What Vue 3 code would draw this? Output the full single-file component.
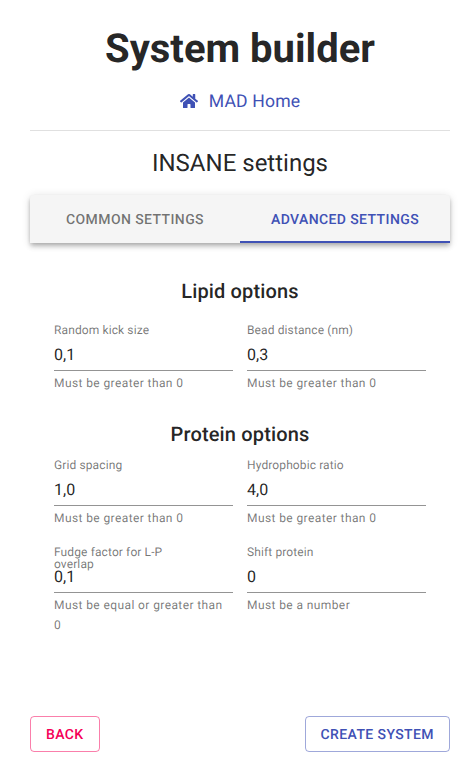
<script setup>
import { ref } from 'vue'

const tabs = ['Common settings', 'Advanced settings']
const active = ref(1)

const sections = ref([
  {
    title: 'Lipid options',
    kind: 'lipid',
    fields: [
      { label: 'Random kick size', value: '0,1', help: 'Must be greater than 0' },
      { label: 'Bead distance (nm)', value: '0,3', help: 'Must be greater than 0' },
    ],
  },
  {
    title: 'Protein options',
    kind: 'protein',
    fields: [
      { label: 'Grid spacing', value: '1,0', help: 'Must be greater than 0' },
      { label: 'Hydrophobic ratio', value: '4,0', help: 'Must be greater than 0' },
      { label: 'Fudge factor for L-P overlap', value: '0,1', help: 'Must be equal or greater than 0' },
      { label: 'Shift protein', value: '0', help: 'Must be a number' },
    ],
  },
])
</script>

<template>
  <main class="page">
    <h1 class="title">System builder</h1>
    <a class="home" href="#">
      <svg class="home-icon" viewBox="0 0 576 512" aria-hidden="true">
        <path fill="currentColor" d="M280.37 148.26L96 300.11V464a16 16 0 0 0 16 16l112.06-.29a16 16 0 0 0 15.92-16V368a16 16 0 0 1 16-16h64a16 16 0 0 1 16 16v95.64a16 16 0 0 0 16 16.05L464 480a16 16 0 0 0 16-16V300L295.67 148.26a12.19 12.19 0 0 0-15.3 0zM571.6 251.47L488 182.56V44.05a12 12 0 0 0-12-12h-56a12 12 0 0 0-12 12v72.61L318.47 43a48 48 0 0 0-61 0L4.34 251.47a12 12 0 0 0-1.6 16.9l25.5 31A12 12 0 0 0 45.15 301l235.22-193.74a12.19 12.19 0 0 1 15.3 0L530.9 301a12 12 0 0 0 16.9-1.6l25.5-31a12 12 0 0 0-1.7-16.93z" />
      </svg>
      <span class="home-text">MAD Home</span>
    </a>
    <hr class="divider" />
    <h2 class="subtitle">INSANE settings</h2>

    <div class="tabs" role="tablist">
      <button
        v-for="(tab, i) in tabs"
        :key="tab"
        class="tab"
        :class="{ active: i === active }"
        role="tab"
        @click="active = i"
      >{{ tab }}</button>
    </div>

    <section v-for="s in sections" :key="s.title" class="section" :class="s.kind">
      <h3 class="section-title">{{ s.title }}</h3>
      <div class="fields">
        <div v-for="f in s.fields" :key="f.label" class="field">
          <label class="label">{{ f.label }}</label>
          <input v-model="f.value" class="input" type="text" :aria-label="f.label" />
          <p class="help">{{ f.help }}</p>
        </div>
      </div>
    </section>

    <div class="actions">
      <button class="btn back">Back</button>
      <button class="btn create">Create system</button>
    </div>
  </main>
</template>

<style>
body {
  background: #fff;
}
</style>

<style scoped>
.page {
  box-sizing: border-box;
  width: 472px;
  height: 777px;
  padding: 25px 22px 25px 30px;
  display: flex;
  flex-direction: column;
  overflow: hidden;
  font-family: Roboto, sans-serif;
  color: rgba(0, 0, 0, 0.87);
}

.page,
.page * {
  text-rendering: geometricPrecision;
}

.page * {
  box-sizing: border-box;
}

.title {
  margin: 0;
  font-size: 40px;
  font-weight: 700;
  line-height: 48px;
  text-align: center;
}

.home {
  display: flex;
  align-items: center;
  justify-content: center;
  gap: 11px;
  height: 26px;
  margin-top: 15px;
  margin-bottom: 16px;
  font-size: 17.6px;
  letter-spacing: 0.00938em;
  color: #3f51b5;
  text-decoration: none;
}

.home-icon {
  width: 18px;
  height: 16px;
}

.home-text {
  padding-top: 2px;
}

.divider {
  width: 100%;
  height: 1px;
  margin: 0;
  border: 0;
  background: rgba(0, 0, 0, 0.12);
}

.subtitle {
  margin: 16px 0;
  font-size: 24px;
  font-weight: 400;
  line-height: 32px;
  text-align: center;
}

.tabs {
  display: flex;
  flex-shrink: 0;
  height: 48px;
  border-radius: 4px 4px 0 0;
  background: #f5f5f5;
  box-shadow: 0 2px 4px -1px rgba(0, 0, 0, 0.2), 0 4px 5px 0 rgba(0, 0, 0, 0.14),
    0 1px 10px 0 rgba(0, 0, 0, 0.12);
}

.tab {
  flex: 1;
  padding: 4px 12px 0;
  border: 0;
  border-bottom: 2px solid transparent;
  background: none;
  font: 500 14px/24px Roboto, sans-serif;
  letter-spacing: 0.02857em;
  text-transform: uppercase;
  color: rgba(0, 0, 0, 0.54);
}

.tab.active {
  color: #3f51b5;
  border-bottom-color: #3f51b5;
}

.section {
  padding: 0 24px;
}

.lipid {
  margin-top: 32px;
}

.protein {
  margin-top: 24px;
}

.section-title {
  margin: 0;
  font-size: 20px;
  font-weight: 500;
  line-height: 32px;
  letter-spacing: 0.0075em;
  text-align: center;
}

.lipid .section-title {
  margin-bottom: 16px;
}

.protein .section-title {
  margin-bottom: 8px;
}

.fields {
  display: grid;
  grid-template-columns: 1fr 1fr;
  gap: 16px 14px;
}

.field {
  min-width: 0;
}

.label {
  display: block;
  height: 16px;
  font-size: 16px;
  line-height: 1;
  letter-spacing: 0.00938em;
  color: rgba(0, 0, 0, 0.54);
  transform: translateY(1.5px) scale(0.75);
  transform-origin: top left;
}

.input {
  display: block;
  width: 100%;
  height: 32px;
  padding: 6px 0;
  border: 0;
  border-bottom: 1px solid rgba(0, 0, 0, 0.42);
  outline: 0;
  background: none;
  font: 400 16px/19px Roboto, sans-serif;
  color: inherit;
}

.help {
  margin: 3px 0 0;
  font-size: 12px;
  line-height: 1.66;
  letter-spacing: 0.03333em;
  color: rgba(0, 0, 0, 0.54);
}

.actions {
  display: flex;
  justify-content: space-between;
  margin-top: auto;
}

.btn {
  height: 36px;
  padding: 6px 15px 4px;
  border: 1px solid;
  border-radius: 4px;
  background: none;
  font: 500 14px/24px Roboto, sans-serif;
  letter-spacing: 0.02857em;
  text-transform: uppercase;
}

.back {
  color: #f50057;
  border-color: rgba(245, 0, 87, 0.5);
}

.create {
  color: #3f51b5;
  border-color: rgba(63, 81, 181, 0.5);
}
</style>
